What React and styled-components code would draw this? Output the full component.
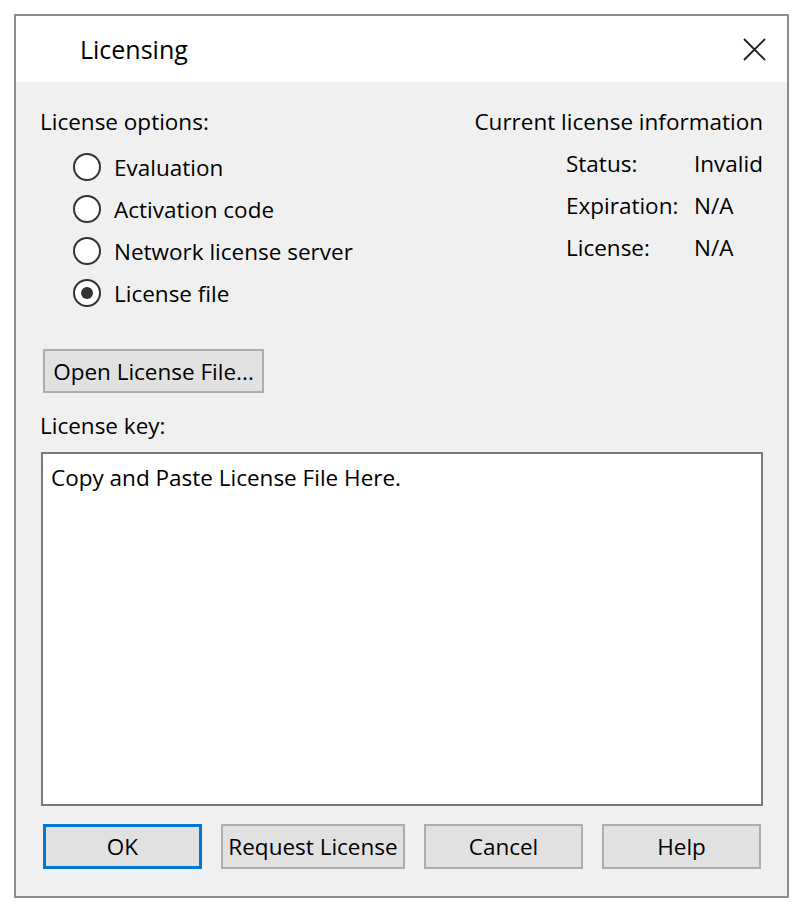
import React, { useState } from 'react';
import styled, { createGlobalStyle } from 'styled-components';

const GlobalStyle = createGlobalStyle`
  html, body {
    margin: 0;
    padding: 0;
    background: #ffffff;
  }
  body {
    font-family: "Open Sans", "Noto Sans", "Liberation Sans", sans-serif;
    color: #000;
  }
`;

// Page wrapper keeps the dialog off the edge like the screenshot
const Page = styled.div`
  padding: 14px;
`;

const Dialog = styled.div`
  width: 771px;
  border: 2px solid #8c8c8c;
  background: #f0f0f0;
  font-size: 22.5px;
`;

const TitleBar = styled.div`
  height: 66px;
  background: #ffffff;
  display: flex;
  align-items: center;
  justify-content: space-between;
  padding: 0 21px 0 64px;
`;

const TitleText = styled.span`
  font-size: 25px;
  line-height: 30px;
`;

const CloseButton = styled.button`
  width: 24px;
  height: 24px;
  padding: 0;
  border: none;
  background: transparent;
  display: flex;
  align-items: center;
  justify-content: center;
  cursor: pointer;
`;

const Body = styled.div`
  padding: 25px 24px 27px 24px;
  display: flex;
  flex-direction: column;
`;

const TopSection = styled.div`
  display: flex;
  justify-content: space-between;
  align-items: flex-start;
`;

const Column = styled.div`
  display: flex;
  flex-direction: column;
`;

const Caption = styled.div`
  line-height: 30px;
  white-space: nowrap;
  text-align: ${(p) => (p.$right ? 'right' : 'left')};
`;

const RadioList = styled.div`
  margin-top: 9px;
  padding-left: 33px;
  display: flex;
  flex-direction: column;
`;

const RadioRow = styled.label`
  height: 42px;
  display: flex;
  align-items: center;
  gap: 13px;
  cursor: pointer;
  white-space: nowrap;
`;

const RadioCircle = styled.span`
  width: 24px;
  height: 24px;
  border: 2px solid #333333;
  border-radius: 50%;
  background: #ffffff;
  display: flex;
  align-items: center;
  justify-content: center;
  flex-shrink: 0;

  &::after {
    content: '';
    width: 12px;
    height: 12px;
    border-radius: 50%;
    background: #333333;
    display: ${(p) => (p.$checked ? 'block' : 'none')};
  }
`;

const InfoColumn = styled.div`
  width: 283px;
  display: flex;
  flex-direction: column;
  align-items: flex-end;
`;

const InfoGrid = styled.div`
  margin-top: 5px;
  width: 197px;
  display: grid;
  grid-template-columns: 128px 1fr;
  grid-auto-rows: 42px;
  align-items: center;
  white-space: nowrap;
`;

const Button = styled.button`
  height: ${(p) => p.$height || 45}px;
  width: ${(p) => p.$width}px;
  padding: 0 2px;
  background: #e1e1e1;
  border: ${(p) => (p.$default ? '3px solid #0078d7' : '2px solid #adadad')};
  font-family: inherit;
  font-size: 22.5px;
  color: #000;
  white-space: nowrap;
  cursor: pointer;
`;

const OpenButtonWrap = styled.div`
  margin: 35px 0 0 3px;
`;

const KeyLabel = styled(Caption)`
  margin-top: 18px;
`;

const KeyArea = styled.textarea`
  margin: 11px 0 0 1px;
  width: 722px;
  height: 354px;
  box-sizing: border-box;
  border: 2px solid #7a7a7a;
  background: #ffffff;
  padding: 9px 8px;
  font-family: inherit;
  font-size: 22.5px;
  line-height: 30px;
  color: #000;
  resize: none;
  outline: none;
`;

const ButtonRow = styled.div`
  margin: 18px 0 0 3px;
  display: flex;
  gap: 19px;
`;

const options = [
  'Evaluation',
  'Activation code',
  'Network license server',
  'License file',
];

const info = [
  ['Status:', 'Invalid'],
  ['Expiration:', 'N/A'],
  ['License:', 'N/A'],
];

const CloseIcon = () => (
  <svg width="23" height="23" viewBox="0 0 23 23">
    <path d="M1 1 L22 22 M22 1 L1 22" stroke="#1e1e1e" strokeWidth="1.8" fill="none" />
  </svg>
);

const App = () => {
  const [selected, setSelected] = useState('License file');

  return (
    <Page>
      <GlobalStyle />
      <Dialog>
        <TitleBar>
          <TitleText>Licensing</TitleText>
          <CloseButton aria-label="Close">
            <CloseIcon />
          </CloseButton>
        </TitleBar>
        <Body>
          <TopSection>
            <Column>
              <Caption>License options:</Caption>
              <RadioList>
                {options.map((opt) => (
                  <RadioRow key={opt} onClick={() => setSelected(opt)}>
                    <RadioCircle $checked={selected === opt} />
                    {opt}
                  </RadioRow>
                ))}
              </RadioList>
            </Column>
            <InfoColumn>
              <Caption $right>Current license information</Caption>
              <InfoGrid>
                {info.map(([label, value]) => (
                  <React.Fragment key={label}>
                    <span>{label}</span>
                    <span>{value}</span>
                  </React.Fragment>
                ))}
              </InfoGrid>
            </InfoColumn>
          </TopSection>

          <OpenButtonWrap>
            <Button $width={221} $height={44}>Open License File...</Button>
          </OpenButtonWrap>

          <KeyLabel>License key:</KeyLabel>
          <KeyArea defaultValue="Copy and Paste License File Here." />

          <ButtonRow>
            <Button $width={159} $default>OK</Button>
            <Button $width={184}>Request License</Button>
            <Button $width={159}>Cancel</Button>
            <Button $width={159}>Help</Button>
          </ButtonRow>
        </Body>
      </Dialog>
    </Page>
  );
};

export default App;
